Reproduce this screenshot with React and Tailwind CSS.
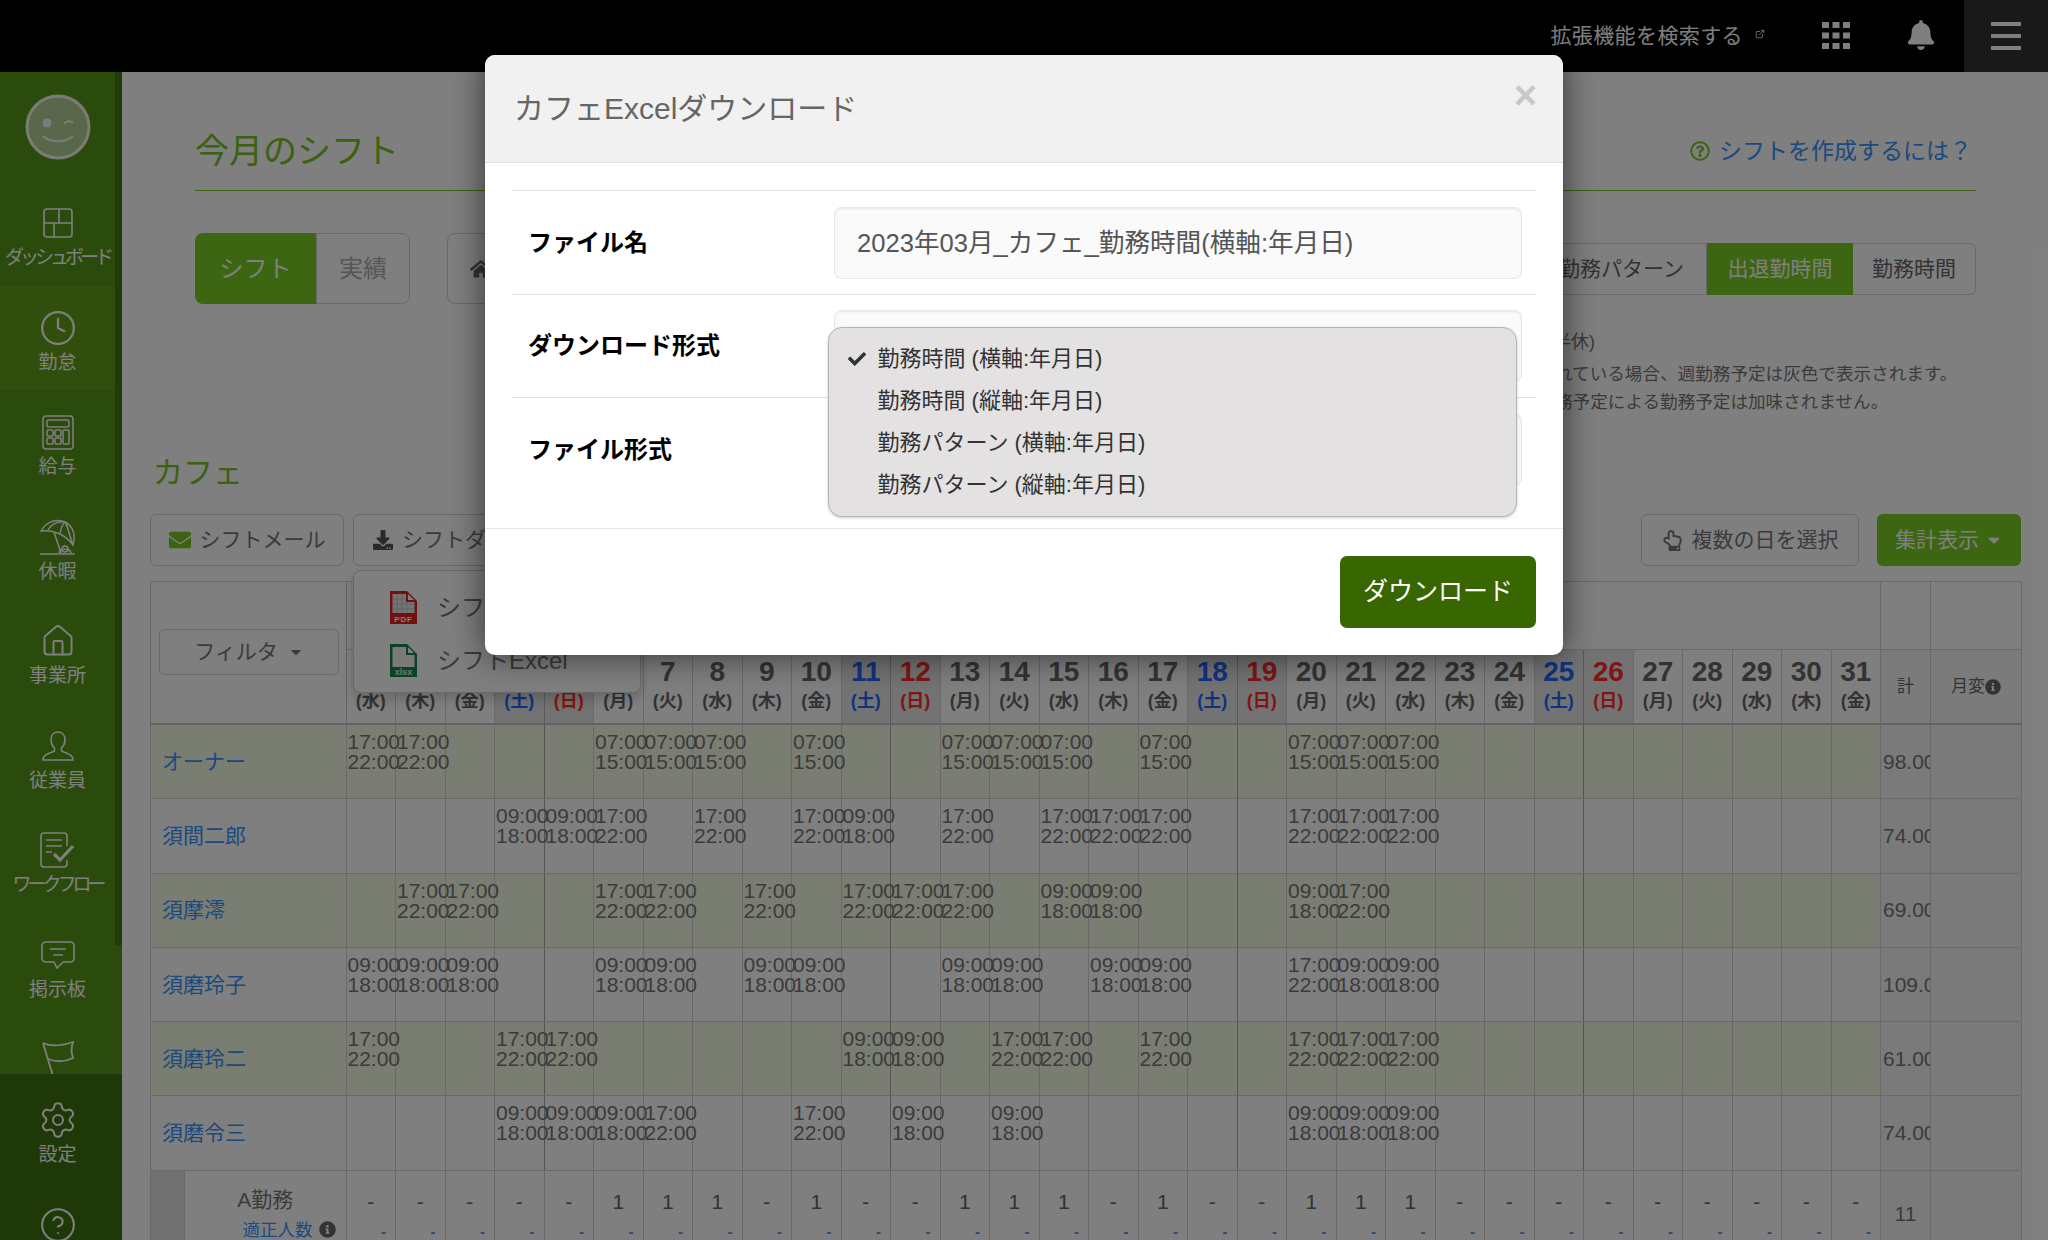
import React from 'react';
import { Clock, House, Settings, CircleHelp } from 'lucide-react';
import { FaBell, FaCaretDown, FaCheck, FaDownload, FaEnvelope, FaHome, FaInfoCircle, FaRegHandPointUp, FaRegQuestionCircle } from 'react-icons/fa';
import { FiExternalLink } from 'react-icons/fi';

const gridCols = 'grid grid-cols-[195.5px_repeat(31,49.5px)_50px_91px]';

const times = {
  a: ['17:00', '22:00'],
  b: ['09:00', '18:00'],
  c: ['07:00', '15:00'],
};

const staff = [
  { name: 'オーナー', total: '98.00', shifts: { 1: 'a', 2: 'a', 6: 'c', 7: 'c', 8: 'c', 10: 'c', 13: 'c', 14: 'c', 15: 'c', 17: 'c', 20: 'c', 21: 'c', 22: 'c' } },
  { name: '須間二郎', total: '74.00', shifts: { 4: 'b', 5: 'b', 6: 'a', 8: 'a', 10: 'a', 11: 'b', 13: 'a', 15: 'a', 16: 'a', 17: 'a', 20: 'a', 21: 'a', 22: 'a' } },
  { name: '須摩澪', total: '69.00', shifts: { 2: 'a', 3: 'a', 6: 'a', 7: 'a', 9: 'a', 11: 'a', 12: 'a', 13: 'a', 15: 'b', 16: 'b', 20: 'b', 21: 'a' } },
  { name: '須磨玲子', total: '109.00', shifts: { 1: 'b', 2: 'b', 3: 'b', 6: 'b', 7: 'b', 9: 'b', 10: 'b', 13: 'b', 14: 'b', 16: 'b', 17: 'b', 20: 'a', 21: 'b', 22: 'b' } },
  { name: '須磨玲二', total: '61.00', shifts: { 1: 'a', 4: 'a', 5: 'a', 11: 'b', 12: 'b', 14: 'a', 15: 'a', 17: 'a', 20: 'a', 21: 'a', 22: 'a' } },
  { name: '須磨令三', total: '74.00', shifts: { 4: 'b', 5: 'b', 6: 'b', 7: 'a', 10: 'a', 12: 'b', 14: 'b', 20: 'b', 21: 'b', 22: 'b' } },
];

const weekdays = ['水', '木', '金', '土', '日', '月', '火'];
const days = Array.from({ length: 31 }, (_, i) => ({ day: i + 1, week: weekdays[i % 7] }));
const aShiftDays = [6, 7, 8, 10, 13, 14, 15, 17, 20, 21, 22];

const DashboardIcon = () => (
  <svg width="30" height="30" viewBox="0 0 30 30" fill="none" stroke="currentColor" strokeWidth="1.6">
    <rect x="1" y="1" width="28" height="28" rx="3" />
    <path d="M1 15H29M16 1V15M11 15V29" />
  </svg>
);

const CalcIcon = () => (
  <svg width="32" height="35" viewBox="0 0 32 35" fill="none" stroke="currentColor" strokeWidth="1.5">
    <rect x="1" y="1" width="30" height="33" rx="3" />
    <rect x="5" y="5" width="22" height="7" rx="1.5" />
    <rect x="5" y="15" width="6" height="6" rx="1" />
    <rect x="13" y="15" width="6" height="6" rx="1" />
    <rect x="21" y="15" width="6" height="14" rx="1" />
    <rect x="5" y="23" width="6" height="6" rx="1" />
    <rect x="13" y="23" width="6" height="6" rx="1" />
  </svg>
);

const BeachIcon = () => (
  <svg width="36" height="36" viewBox="0 0 36 36" fill="none" stroke="currentColor" strokeWidth="1.5">
    <path d="M1 12C6 3 16 -1 25 3C33 7 36 16 33 26C28 19 24 17 20 15C13 12 7 11 1 12Z" />
    <path d="M8 11C11 6 16 2 25 3C28 8 29 15 33 26M20 15C21 9 22 5 25 3" />
    <path d="M14 13L21 34" />
    <path d="M19 34C20 29 30 29 31 34" />
    <circle cx="25" cy="30" r="3" />
    <path d="M0 35H35" />
  </svg>
);

const UserIcon = () => (
  <svg width="32" height="30" viewBox="0 0 32 30" fill="none" stroke="currentColor" strokeWidth="1.6">
    <path d="M16 1C11 1 9 5 9 9C9 12 10.500 15 12.500 17V20C8 22 1 23 1 29H31C31 23 24 22 19.500 20V17C21.500 15 23 12 23 9C23 5 21 1 16 1Z" />
  </svg>
);

const WorkflowIcon = () => (
  <svg width="35" height="36" viewBox="0 0 35 36" fill="none" stroke="currentColor" strokeWidth="1.6">
    <path d="M27 14V4C27 2 26 1 24 1H4C2 1 1 2 1 4V32C1 34 2 35 4 35H24C26 35 27 34 27 32V28" />
    <path d="M6 8H22M6 14H22M6 20H12" />
    <path d="M14 22L20 28L33 14" strokeWidth="3.200" />
  </svg>
);

const MessageIcon = () => (
  <svg width="34" height="28" viewBox="0 0 34 28" fill="none" stroke="currentColor" strokeWidth="1.6">
    <path d="M5 1H29C31.500 1 33 2.500 33 5V17C33 19.500 31.500 21 29 21H22L16 27L13 21H5C2.500 21 1 19.500 1 17V5C1 2.500 2.500 1 5 1Z" />
    <path d="M9 8H25M12 14H22" />
  </svg>
);

const FlagIcon = () => (
  <svg width="33" height="36" viewBox="0 0 33 36" fill="none" stroke="currentColor" strokeWidth="1.800">
    <path d="M2 2L12 35" />
    <path d="M2 2C10 6 20 5 32 1C30 7 30 12 32 17C24 21 15 21 7 18" />
  </svg>
);

const Avatar = () => (
  <svg width="66" height="66" viewBox="0 0 66 66">
    <circle cx="33" cy="33" r="31" fill="#ffffff" fillOpacity="0.55" stroke="#ffffff" strokeWidth="3" strokeOpacity="0.9" />
    <circle cx="22" cy="29" r="4.500" fill="#ffffff" fillOpacity="0.9" />
    <path d="M39 30C41 27 45 26 48 29" fill="none" stroke="#ffffff" strokeOpacity="0.9" strokeWidth="2" />
    <path d="M18 42C25 49 41 49 48 42" fill="none" stroke="#ffffff" strokeOpacity="0.9" strokeWidth="2" />
  </svg>
);

const PdfIcon = () => (
  <svg width="27" height="33" viewBox="0 0 27 33">
    <path d="M0 0H17L27 10V33H0Z" fill="#e02020" />
    <path d="M2.500 3H16V11H24.500V22H2.500Z" fill="#e8e8e8" />
    <path d="M18 3L24 9H18Z" fill="#ffffff" />
    <path d="M7 3V22M12 3V22M17 11V22M2.500 8H16M2.500 13H24M2.500 18H24" stroke="#bdbdbd" strokeWidth="0.800" />
    <text x="13.500" y="30.500" textAnchor="middle" fontSize="8" fontWeight="700" letterSpacing="0.800" fill="#ffffff">PDF</text>
  </svg>
);

const XlsxIcon = () => (
  <svg width="27" height="33" viewBox="0 0 27 33">
    <path d="M0 0H17L27 10V33H0Z" fill="#17854a" />
    <path d="M2.500 3H16V11H24.500V23H2.500Z" fill="#f4f4f4" />
    <path d="M18 3L24 9H18Z" fill="#ffffff" />
    <text x="13.500" y="31" textAnchor="middle" fontSize="9" fontWeight="700" fill="#d8f0e0">xlsx</text>
  </svg>
);

const GridIcon = () => (
  <svg width="28" height="27" viewBox="0 0 28 27" fill="currentColor">
    <rect x="0" y="0" width="7" height="6" />
    <rect x="10.500" y="0" width="7" height="6" />
    <rect x="21" y="0" width="7" height="6" />
    <rect x="0" y="10.500" width="7" height="6" />
    <rect x="10.500" y="10.500" width="7" height="6" />
    <rect x="21" y="10.500" width="7" height="6" />
    <rect x="0" y="21" width="7" height="6" />
    <rect x="10.500" y="21" width="7" height="6" />
    <rect x="21" y="21" width="7" height="6" />
  </svg>
);

const navItems = [
  { label: 'ダッシュボード', icon: <DashboardIcon />, squeeze: true },
  { label: '勤怠', icon: <Clock size={38} strokeWidth={1.4} />, active: true },
  { label: '給与', icon: <CalcIcon /> },
  { label: '休暇', icon: <BeachIcon /> },
  { label: '事業所', icon: <House size={36} strokeWidth={1.3} /> },
  { label: '従業員', icon: <UserIcon /> },
  { label: 'ワークフロー', icon: <WorkflowIcon />, squeeze: true },
  { label: '掲示板', icon: <MessageIcon /> },
  { label: '', icon: <FlagIcon /> },
];

const NavItem = ({ item }) => (
  <div className={`flex h-[104.5px] shrink-0 flex-col items-center pt-[24px] ${item.active ? 'bg-[#619f1b]' : ''}`}>
    <div className="flex h-[36px] items-center justify-center">{item.icon}</div>
    <div className={`mt-[5px] whitespace-nowrap text-[19px] leading-[24px] ${item.squeeze ? 'tracking-[-4px]' : 'tracking-[0px]'}`}>
      {item.label}
    </div>
  </div>
);

const Sidebar = () => (
  <aside className="relative h-[1168px] w-[122px] shrink-0 overflow-hidden bg-[#569618] text-white">
    <div className="w-[115px]">
      <div className="flex h-[109px] items-center justify-center">
        <Avatar />
      </div>
      {navItems.map((item, i) => (
        <NavItem key={i} item={item} />
      ))}
    </div>
    <div className="absolute right-0 top-0 h-[874px] w-[7px] rounded-b-[4px] bg-[#3f7a10]" />
    <div className="absolute left-0 top-[1002px] h-[166px] w-full bg-[#3d720f] pt-[4px]">
      <div className="w-[115px]">
        <NavItem item={{ label: '設定', icon: <Settings size={40} strokeWidth={1.2} /> }} />
        <NavItem item={{ label: '', icon: <CircleHelp size={38} strokeWidth={1.3} /> }} />
      </div>
    </div>
  </aside>
);

const Header = () => (
  <header className="flex h-[72px] items-center justify-end bg-black text-white">
    <span className="text-[21px] tracking-[0.4px]">拡張機能を検索する</span>
    <FiExternalLink className="ml-[12px] mb-[4px]" size={10} />
    <div className="ml-[57px] mb-[2px]">
      <GridIcon />
    </div>
    <FaBell className="ml-[56px] mb-[2px]" size={30} />
    <div className="ml-[28px] flex h-[72px] w-[84px] flex-col items-center justify-center gap-[8px] bg-[#333333]">
      <div className="h-[4px] w-[30px] bg-white" />
      <div className="h-[4px] w-[30px] bg-white" />
      <div className="h-[4px] w-[30px] bg-white" />
    </div>
  </header>
);

const TopSection = () => (
  <section className="pl-[73px] pr-[72px]">
    <div className="flex items-center justify-between border-b border-[#78c020] pb-[20px] pt-[60px]">
      <h1 className="text-[34px] leading-[38px] text-[#74c41e]">今月のシフト</h1>
      <a className="mr-[4px] flex items-center text-[23px] text-[#3494ff]">
        <FaRegQuestionCircle className="mr-[9px] text-[#78c820]" size={20} />
        シフトを作成するには？
      </a>
    </div>
    <div className="mt-[42px] flex items-start justify-between">
      <div className="flex items-start">
        <div className="flex h-[71px] text-[24px]">
          <div className="flex w-[121px] items-center justify-center rounded-l-[8px] bg-[#78cc22] text-white">シフト</div>
          <div className="flex w-[94px] items-center justify-center rounded-r-[8px] border border-[#d2d2d2] text-[#aaaaaa]">実績</div>
        </div>
        <div className="ml-[37px] flex h-[71px] w-[160px] items-center rounded-[8px] border border-[#d2d2d2] pl-[22px] text-[#666666]">
          <FaHome size={22} />
        </div>
      </div>
      <div className="mt-[10px] flex w-[440px] flex-col">
        <div className="flex h-[52px] text-[21px] text-[#666666]">
          <div className="flex w-[171px] items-center justify-center rounded-l-[6px] border border-[#d2d2d2]">勤務パターン</div>
          <div className="flex w-[146px] items-center justify-center bg-[#78cc22] text-white">出退勤時間</div>
          <div className="flex w-[123px] items-center justify-center rounded-r-[6px] border border-l-0 border-[#d2d2d2]">勤務時間</div>
        </div>
        <div className="ml-[17px] mt-[33px] whitespace-nowrap text-[17.600px] leading-[28px] text-[#777777]">
          <div className="text-[18px]">半休)</div>
          <div className="mt-[4px] pl-[2px]">れている場合、週勤務予定は灰色で表示されます。</div>
          <div className="pl-[2px]">務予定による勤務予定は加味されません。</div>
        </div>
      </div>
    </div>
  </section>
);

const Toolbar = () => (
  <div className="mt-[21px] flex h-[52px] justify-between text-[21px] text-[#777777]">
    <div className="flex gap-[9px]">
      <button className="flex w-[194px] items-center justify-center gap-[9px] rounded-[6px] border border-[#d2d2d2]">
        <FaEnvelope className="text-[#78c820]" size={22} />
        シフトメール
      </button>
      <div className="relative">
        <button className="flex h-[52px] w-[240px] items-center gap-[9px] rounded-[6px] border border-[#d2d2d2] pl-[19px]">
          <FaDownload className="text-[#555555]" size={20} />
          シフトダウンロード
        </button>
        <div className="absolute left-0 top-[56px] z-10 h-[123px] w-[288px] rounded-[8px] border border-[#d2d2d2] bg-white pt-[10px] text-[24px] shadow-[0_6px_12px_rgba(0,0,0,0.175)]">
          <div className="flex h-[53px] items-center pl-[36px]">
            <PdfIcon />
            <span className="ml-[20px]">シフトPDF</span>
          </div>
          <div className="flex h-[53px] items-center pl-[36px]">
            <XlsxIcon />
            <span className="ml-[20px]">シフトExcel</span>
          </div>
        </div>
      </div>
    </div>
    <div className="flex gap-[18px]">
      <button className="flex w-[218px] items-center justify-center gap-[9px] rounded-[6px] border border-[#d2d2d2]">
        <FaRegHandPointUp size={21} />
        複数の日を選択
      </button>
      <button className="flex w-[144px] items-center justify-center gap-[6px] rounded-[6px] bg-[#78cc22] text-white">
        集計表示
        <FaCaretDown size={18} />
      </button>
    </div>
  </div>
);

const dayColor = (week) => {
  if (week === '土') return 'text-[#2364ff]';
  if (week === '日') return 'text-[#ff2a2a]';
  return 'text-[#666666]';
};

const TableHead = () => (
  <div className={`${gridCols} grid-rows-[68px_75px] border-t border-[#d2d2d2]`}>
    <div className="row-span-2 border-b-2 border-r border-[#c4c4c4] pl-[8px] pt-[47px]">
      <button className="flex h-[46px] w-[180px] items-center justify-center gap-[10px] rounded-[6px] border border-[#d2d2d2] text-[21px] text-[#777777]">
        フィルタ
        <FaCaretDown size={16} />
      </button>
    </div>
    <div className="col-span-31 border-b border-r border-[#d2d2d2]" />
    <div className="border-b border-r border-[#d2d2d2]" />
    <div className="border-b border-r border-[#d2d2d2]" />
    {days.map((d) => (
      <div
        key={d.day}
        className={`flex flex-col items-center border-b-2 border-r border-b-[#c4c4c4] font-bold ${d.week === '土' ? 'border-r-[#b4b4b4] bg-[#e6e6e6]' : 'border-r-[#d2d2d2]'} ${d.week === '日' ? 'bg-[#e6e6e6]' : ''} ${dayColor(d.week)}`}
      >
        <span className="mt-[6px] text-[28px] leading-[32px]">{d.day}</span>
        <span className="text-[18px] leading-[26px]">({d.week})</span>
      </div>
    ))}
    <div className="flex items-center justify-center border-b-2 border-r border-b-[#c4c4c4] border-r-[#d2d2d2] bg-[#f6f6f6] text-[17px] text-[#666666]">計</div>
    <div className="flex items-center justify-center border-b-2 border-r border-b-[#c4c4c4] border-r-[#d2d2d2] bg-[#f6f6f6] text-[17px] text-[#666666]">
      月変
      <FaInfoCircle size={16} />
    </div>
  </div>
);

const StaffRow = ({ row, tinted }) => (
  <div className={`${gridCols} h-[74.3px] border-b border-[#d2d2d2] ${tinted ? 'bg-[#f4fae4]' : ''}`}>
    <div className="flex items-center border-r border-[#d2d2d2] pl-[11px] text-[21px] text-[#3494ff]">{row.name}</div>
    {days.map((d) => {
      const t = times[row.shifts[d.day]];
      return (
        <div
          key={d.day}
          className={`whitespace-nowrap border-r pl-px pt-[7px] text-[21px] leading-[20px] text-[#777777] ${d.week === '土' ? 'border-r-[#a8a8a8]' : 'border-r-[#d2d2d2]'}`}
        >
          {t && (
            <>
              <div>{t[0]}</div>
              <div>{t[1]}</div>
            </>
          )}
        </div>
      );
    })}
    <div className="flex items-center overflow-hidden whitespace-nowrap border-r border-[#d2d2d2] bg-[#f4f4f4] pl-[2px] text-[21px] text-[#777777]">{row.total}</div>
    <div className="border-r border-[#d2d2d2] bg-[#f4f4f4]" />
  </div>
);

const StatRow = () => (
  <div className={`${gridCols} h-[70px]`}>
    <div className="flex border-r border-[#d2d2d2]">
      <div className="w-[34px] border-r border-[#d2d2d2] bg-[#e2e2e2]" />
      <div className="flex-1 pt-[17px] text-center">
        <div className="text-[21px] leading-[24px] text-[#777777]">A勤務</div>
        <div className="mt-[6px] flex items-center justify-end gap-[6px] pr-[10px] text-[17.500px] leading-[24px] text-[#3494ff]">
          適正人数
          <FaInfoCircle className="text-[#666666]" size={17} />
        </div>
      </div>
    </div>
    {days.map((d) => (
      <div key={d.day} className="border-r border-[#d2d2d2] pt-[19px] text-center">
        <div className="text-[21px] leading-[24px] text-[#666666]">{aShiftDays.includes(d.day) ? '1' : '-'}</div>
        <div className="mt-[6px] pr-[9px] text-right text-[15px] font-bold leading-[24px] text-[#3494ff]">-</div>
      </div>
    ))}
    <div className="border-r border-[#d2d2d2] bg-[#f4f4f4] pt-[31px] text-center text-[21px] leading-[24px] text-[#777777]">11</div>
    <div className="border-r border-[#d2d2d2] bg-[#f4f4f4]" />
  </div>
);

const ShiftTable = () => (
  <div className="mt-[15px] w-[1871px] border-l border-[#d2d2d2]">
    <TableHead />
    {staff.map((row, i) => (
      <StaffRow key={row.name} row={row} tinted={i % 2 === 0} />
    ))}
    <StatRow />
  </div>
);

const selectOptions = ['勤務時間 (横軸:年月日)', '勤務時間 (縦軸:年月日)', '勤務パターン (横軸:年月日)', '勤務パターン (縦軸:年月日)'];

const FieldRow = ({ label, inputTop, children }) => (
  <div className={`flex h-[103.500px] border-t border-[#e2e2e2] ${inputTop}`}>
    <div className="flex h-[72px] w-[322px] items-center pl-[16px] text-[24px] font-bold text-black">{label}</div>
    <div className="h-[72px] w-[688px] rounded-[7px] border border-[#e8e8e8] bg-[#fafafa] shadow-[inset_0_1px_2px_rgba(0,0,0,0.08)]">{children}</div>
  </div>
);

const DownloadModal = () => (
  <div className="absolute left-[485px] top-[55px] z-30 h-[600px] w-[1078px] rounded-[10px] bg-white shadow-[0_0_34px_rgba(0,0,0,0.6)]">
    <div className="relative flex h-[108px] items-center rounded-t-[10px] border-b border-[#dfdfdf] bg-[#f1f1f1] pl-[29px] text-[30px] text-[#666666]">
      カフェExcelダウンロード
      <span className="absolute right-[26px] top-[18px] text-[40px] font-bold leading-[44px] text-[#c8c8c8]">×</span>
    </div>
    <div className="h-[365px] px-[27px] pt-[27px]">
      <FieldRow label="ファイル名" inputTop="pt-[16px]">
        <div className="flex h-full items-center pl-[22px] text-[25.600px] text-[#555555]">2023年03月_カフェ_勤務時間(横軸:年月日)</div>
      </FieldRow>
      <FieldRow label="ダウンロード形式" inputTop="pt-[15px]" />
      <FieldRow label="ファイル形式" inputTop="pt-[16px]" />
    </div>
    <div className="flex justify-end border-t border-[#e6e6e6] pr-[27px] pt-[27px]">
      <button className="h-[72px] w-[196px] rounded-[7px] bg-[#386600] text-[25px] text-white">ダウンロード</button>
    </div>
    <ul className="absolute left-[342.500px] top-[271.700px] w-[689px] rounded-[14px] border border-[#b5b5b5] bg-[#e4e1e2] py-[10px] text-[22px] leading-[42px] text-[#333333] shadow-[0_1px_3px_rgba(0,0,0,0.2)]">
      {selectOptions.map((opt, i) => (
        <li key={opt} className="flex items-center pl-[19px]">
          <span className="w-[30px]">{i === 0 && <FaCheck size={18} />}</span>
          {opt}
        </li>
      ))}
    </ul>
  </div>
);

export default function App() {
  return (
    <div className="relative h-[1240px] w-[2048px] overflow-hidden bg-white [font-family:'Liberation_Sans','Noto_Sans_CJK_JP',sans-serif]">
      <Header />
      <div className="flex">
        <Sidebar />
        <main className="min-w-0 flex-1">
          <TopSection />
          <section className="mt-[37px] pl-[28px] pr-[27px]">
            <h2 className="ml-[3px] text-[30px] leading-[40px] text-[#74c41e]">カフェ</h2>
            <Toolbar />
            <ShiftTable />
          </section>
        </main>
      </div>
      <div className="absolute inset-0 z-20 bg-black/50" />
      <DownloadModal />
    </div>
  );
}
